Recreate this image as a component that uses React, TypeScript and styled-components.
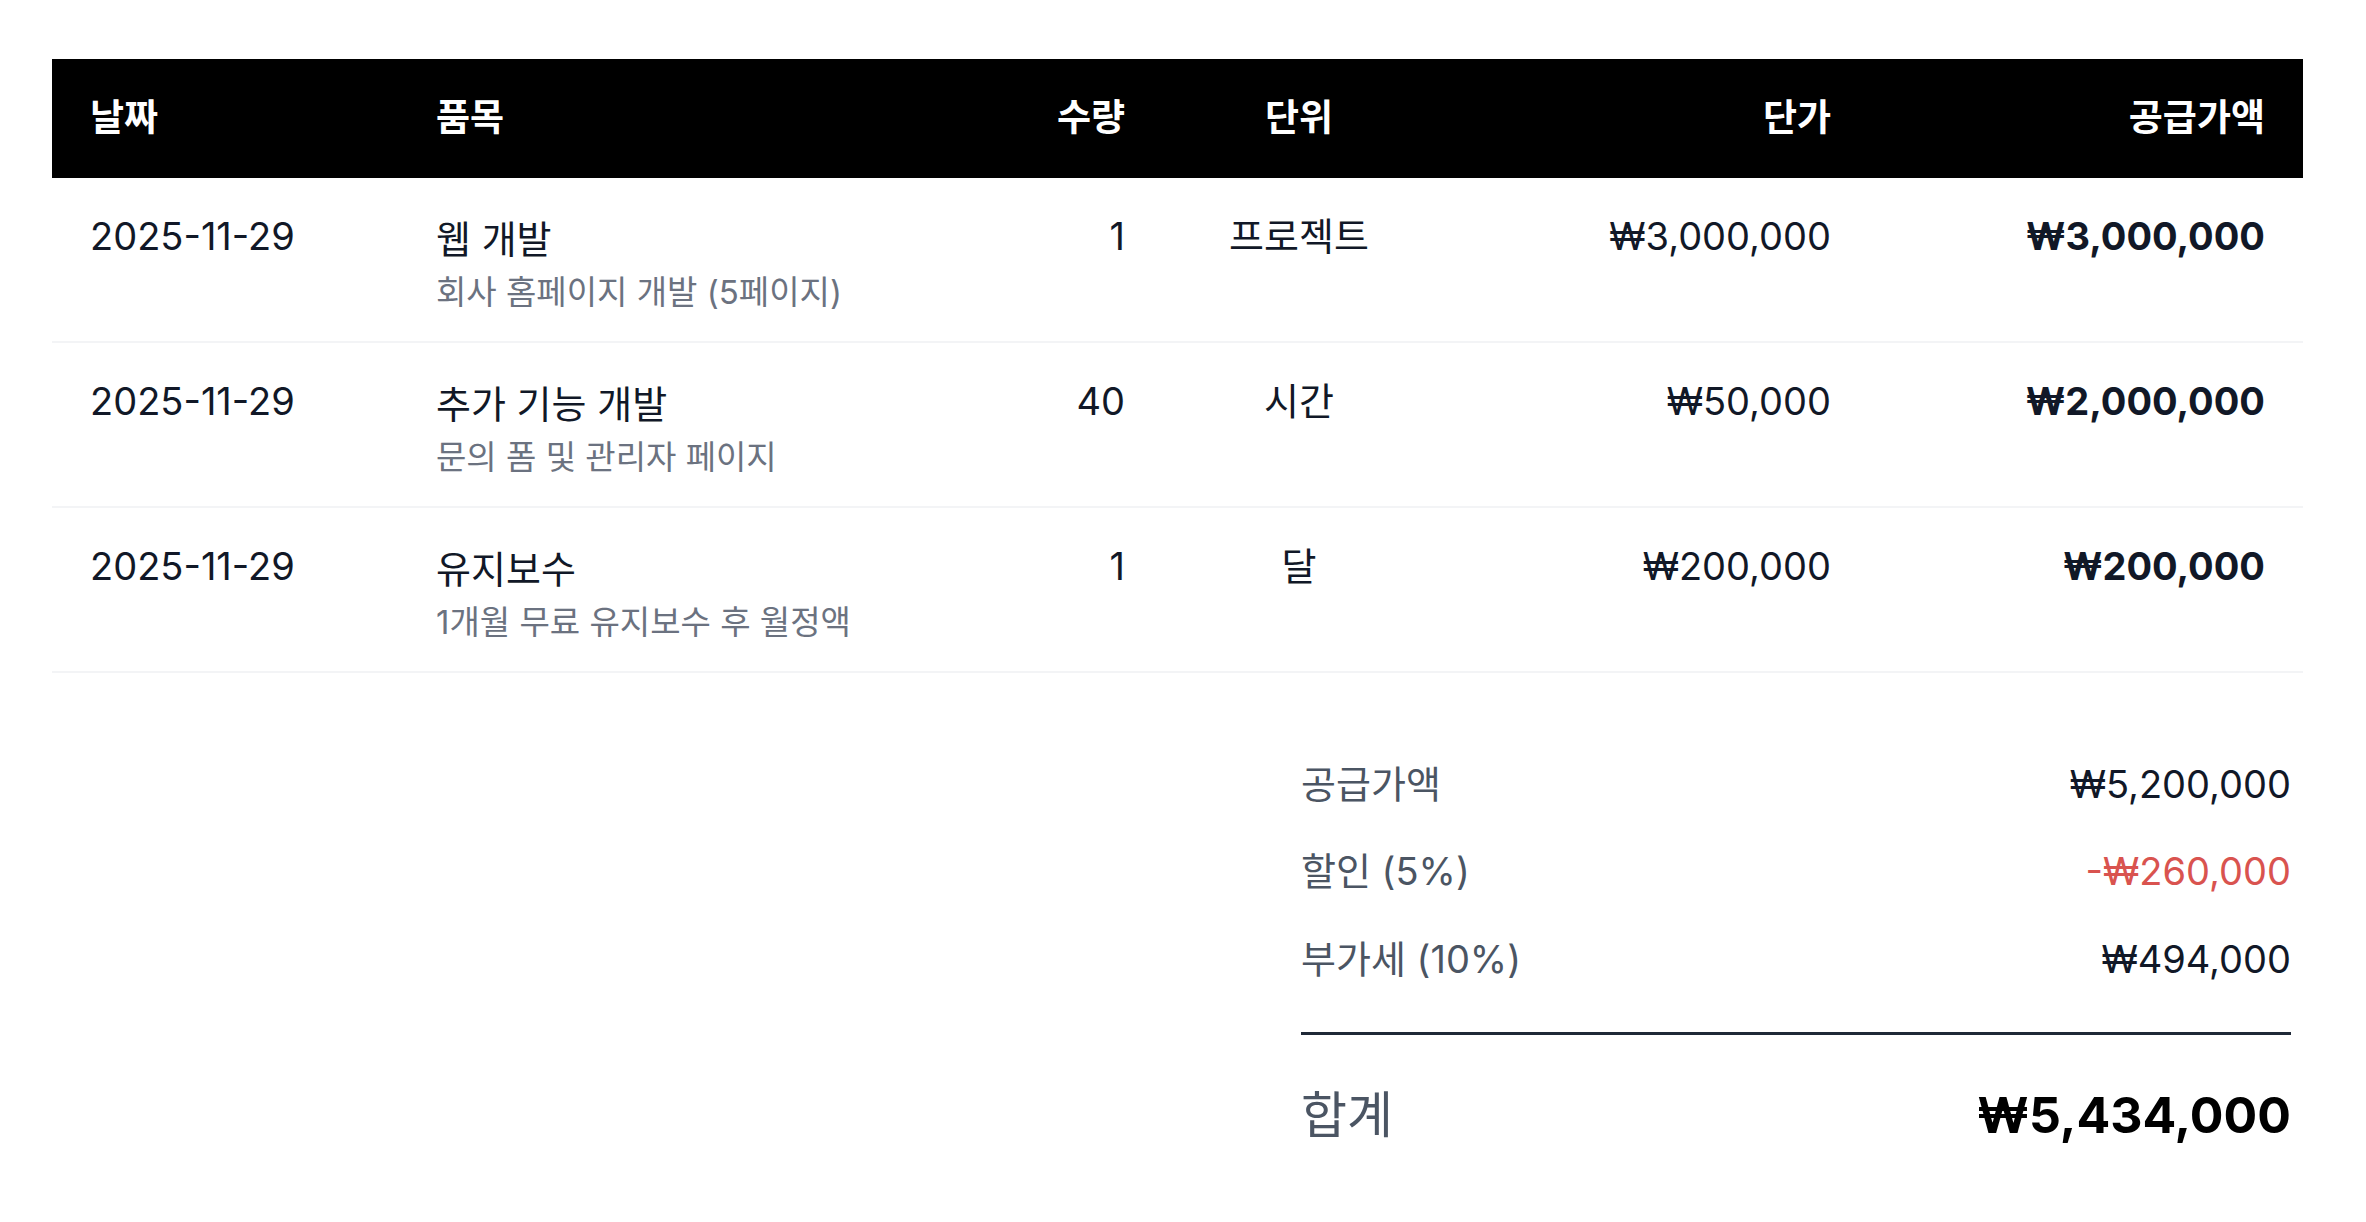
import React from 'react'
import styled, { createGlobalStyle } from 'styled-components'

const GlobalStyle = createGlobalStyle`
  html, body {
    margin: 0;
    padding: 0;
    background: #ffffff;
  }
  body {
    font-family: Inter, 'Noto Sans CJK KR', 'Noto Sans', sans-serif;
    color: #111827;
    -webkit-font-smoothing: antialiased;
  }
`

const COLUMNS = '346px 598px 167px 272px 434px 434px'

type Align = 'left' | 'center' | 'right'

const Page = styled.div`
  padding: 59px 63px 60px 52px;
`

const Table = styled.div`
  display: flex;
  flex-direction: column;
  width: 100%;
`

const HeaderRow = styled.div`
  display: grid;
  grid-template-columns: ${COLUMNS};
  height: 119px;
  background: #000000;
  align-items: center;
`

const HeaderCell = styled.div<{ $align?: Align }>`
  padding: 0 38px;
  font-size: 37px;
  font-weight: 700;
  color: #ffffff;
  line-height: 1.3;
  text-align: ${({ $align }) => $align || 'left'};
`

const BodyRow = styled.div`
  display: grid;
  grid-template-columns: ${COLUMNS};
  height: 165px;
  box-sizing: border-box;
  border-bottom: 2px solid #f3f4f6;
  align-items: start;
`

const Cell = styled.div<{ $align?: Align; $bold?: boolean }>`
  padding: 34px 38px 0;
  font-size: 38px;
  line-height: 1.3;
  color: #111827;
  font-weight: ${({ $bold }) => ($bold ? 700 : 400)};
  text-align: ${({ $align }) => $align || 'left'};
  white-space: nowrap;
`

const ItemCell = styled(Cell)`
  display: flex;
  flex-direction: column;
  padding-top: 36px;
`

const ItemName = styled.div`
  font-size: 38px;
  line-height: 1.35;
`

const ItemDesc = styled.div`
  margin-top: 4px;
  font-size: 33px;
  line-height: 1.4;
  color: #6b7280;
`

const Summary = styled.div`
  width: 990px;
  margin: 87px 12px 0 auto;
  display: flex;
  flex-direction: column;
`

const SummaryRow = styled.div`
  display: flex;
  justify-content: space-between;
  align-items: baseline;
  font-size: 38px;
  line-height: 1.3;
  margin-bottom: 38px;
`

const SummaryLabel = styled.span`
  color: #4b5563;
`

const SummaryValue = styled.span<{ $tone?: 'default' | 'danger' }>`
  color: ${({ $tone }) => ($tone === 'danger' ? '#d9534f' : '#111827')};
`

const Divider = styled.div`
  height: 3px;
  background: #1f2937;
  margin-top: 10px;
`

const TotalRow = styled.div`
  display: flex;
  justify-content: space-between;
  align-items: baseline;
  margin-top: 48px;
  line-height: 1.3;
`

const TotalLabel = styled.span`
  font-size: 50px;
  color: #4b5563;
`

const TotalValue = styled.span`
  font-size: 50px;
  font-weight: 700;
  color: #000000;
`

type Line = {
  date: string
  name: string
  desc: string
  qty: number
  unit: string
  price: number
}

const lines: Line[] = [
  { date: '2025-11-29', name: '웹 개발', desc: '회사 홈페이지 개발 (5페이지)', qty: 1, unit: '프로젝트', price: 3000000 },
  { date: '2025-11-29', name: '추가 기능 개발', desc: '문의 폼 및 관리자 페이지', qty: 40, unit: '시간', price: 50000 },
  { date: '2025-11-29', name: '유지보수', desc: '1개월 무료 유지보수 후 월정액', qty: 1, unit: '달', price: 200000 },
]

const won = (n: number) => `₩${n.toLocaleString('en-US')}`

export default function App() {
  const supply = lines.reduce((sum, l) => sum + l.qty * l.price, 0)
  const discount = Math.round(supply * 0.05)
  const vat = Math.round((supply - discount) * 0.1)
  const total = supply - discount + vat

  return (
    <>
      <GlobalStyle />
      <Page>
        <Table>
          <HeaderRow>
            <HeaderCell>날짜</HeaderCell>
            <HeaderCell>품목</HeaderCell>
            <HeaderCell $align="right">수량</HeaderCell>
            <HeaderCell $align="center">단위</HeaderCell>
            <HeaderCell $align="right">단가</HeaderCell>
            <HeaderCell $align="right">공급가액</HeaderCell>
          </HeaderRow>
          {lines.map((l, i) => (
            <BodyRow key={i}>
              <Cell>{l.date}</Cell>
              <ItemCell>
                <ItemName>{l.name}</ItemName>
                <ItemDesc>{l.desc}</ItemDesc>
              </ItemCell>
              <Cell $align="right">{l.qty}</Cell>
              <Cell $align="center">{l.unit}</Cell>
              <Cell $align="right">{won(l.price)}</Cell>
              <Cell $align="right" $bold>
                {won(l.qty * l.price)}
              </Cell>
            </BodyRow>
          ))}
        </Table>

        <Summary>
          <SummaryRow>
            <SummaryLabel>공급가액</SummaryLabel>
            <SummaryValue>{won(supply)}</SummaryValue>
          </SummaryRow>
          <SummaryRow>
            <SummaryLabel>할인 (5%)</SummaryLabel>
            <SummaryValue $tone="danger">-{won(discount)}</SummaryValue>
          </SummaryRow>
          <SummaryRow>
            <SummaryLabel>부가세 (10%)</SummaryLabel>
            <SummaryValue>{won(vat)}</SummaryValue>
          </SummaryRow>
          <Divider />
          <TotalRow>
            <TotalLabel>합계</TotalLabel>
            <TotalValue>{won(total)}</TotalValue>
          </TotalRow>
        </Summary>
      </Page>
    </>
  )
}
